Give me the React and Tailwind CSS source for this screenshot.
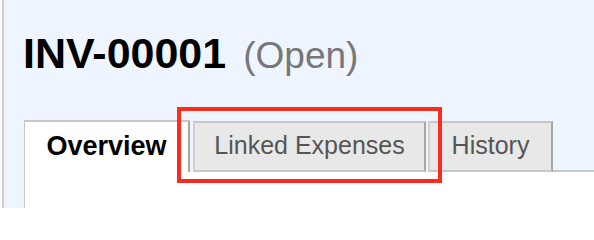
const font = { fontFamily: '"Liberation Sans", Arial, sans-serif' };

const Tab = ({ label, active, width, className = "" }) => {
  if (active) {
    return (
      <div
        className={`h-[52px] bg-white border-t-2 border-l border-r-2 border-t-[#c8c8c8] border-l-[#c8c8c8] border-r-[#a6a6a6] pt-[11px] text-center text-[27px] font-bold leading-none text-black ${width} ${className}`}
      >
        {label}
      </div>
    );
  }
  return (
    <div
      className={`h-[51px] bg-[#e8e8e8] border-t-2 border-l-2 border-r-2 border-b-2 border-t-[#c8c8c8] border-l-[#d0d0d0] border-r-[#a6a6a6] border-b-[#c8c8c8] pt-[10px] text-center text-[25px] leading-none text-[#555] ${width} ${className}`}
    >
      {label}
    </div>
  );
};

export default function App() {
  return (
    <div className="relative w-[594px] h-[208px] overflow-hidden bg-white pl-[2px]" style={font}>
      <div className="flex h-full flex-col border-l-2 border-[#cfcfcf] bg-[#eef5fe]">
        <h1 className="pl-[19px] pt-[32px] text-[43px] leading-[42px] font-bold text-black whitespace-nowrap">
          INV-00001
          <span className="ml-[17px] text-[37px] font-normal text-[#777]">(Open)</span>
        </h1>

        <div className="mt-[43px] flex items-end pl-[20px]">
          <Tab label="Overview" active width="w-[166px]" />
          <Tab label="Linked Expenses" width="w-[233px]" className="ml-[3px]" />
          <Tab label="History" width="w-[125px]" className="ml-[2px]" />
          <div className="flex-1 border-b-2 border-[#c8c8c8]" />
        </div>

        <div className="ml-[20px] flex-1 border-l border-[#c8c8c8] bg-white" />
      </div>

      {/* highlight box */}
      <div className="absolute left-[177px] top-[107px] h-[76px] w-[265px] border-4 border-[#f82c1f]" />
    </div>
  );
}
